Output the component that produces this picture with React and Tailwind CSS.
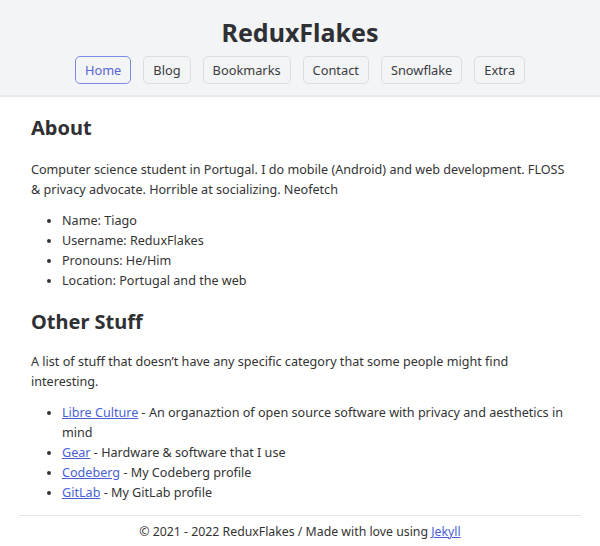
export default function App() {
  const nav = ["Home", "Blog", "Bookmarks", "Contact", "Snowflake", "Extra"];
  return (
    <div className="min-h-[546px] bg-white text-[#333] font-['Noto_Sans',sans-serif] text-[12.6px] leading-[20px]">
      <header className="bg-[#f3f4f6] border-b-2 border-[#e8e9ec] pt-[15px] pb-[11px] flex flex-col items-center">
        <h1 className="text-[25px] leading-[34px] font-bold text-[#2f3033]">ReduxFlakes</h1>
        <nav className="mt-[7px] flex gap-[12px]">
          {nav.map((n, i) => (
            <a
              key={n}
              className={
                i === 0
                  ? "h-[28px] px-[9px] flex items-center rounded-[5px] border border-[#7b8be0] text-[#5665d4] text-[12.8px]"
                  : "h-[28px] px-[9px] flex items-center rounded-[5px] border border-[#dcdde0] text-[#3a3b3e] text-[12.8px]"
              }
            >
              {n}
            </a>
          ))}
        </nav>
      </header>
      <main className="pl-[31px] pr-[31px] pt-[18px]">
        <h2 className="text-[20px] leading-[26px] font-bold text-[#2f3033]">About</h2>
        <p className="mt-[19px]">
          Computer science student in Portugal. I do mobile (Android) and web development. FLOSS &amp; privacy advocate. Horrible at socializing. Neofetch
        </p>
        <ul className="mt-[11px] list-disc pl-[31px]">
          <li>Name: Tiago</li>
          <li>Username: ReduxFlakes</li>
          <li>Pronouns: He/Him</li>
          <li>Location: Portugal and the web</li>
        </ul>
        <h2 className="mt-[18px] text-[20px] leading-[26px] font-bold text-[#2f3033]">Other Stuff</h2>
        <p className="mt-[17px]">
          A list of stuff that doesn’t have any specific category that some people might find interesting.
        </p>
        <ul className="mt-[11px] list-disc pl-[31px]">
          <li><a className="text-[#4a5fd6] underline">Libre Culture</a> - An organaztion of open source software with privacy and aesthetics in mind</li>
          <li><a className="text-[#4a5fd6] underline">Gear</a> - Hardware &amp; software that I use</li>
          <li><a className="text-[#4a5fd6] underline">Codeberg</a> - My Codeberg profile</li>
          <li><a className="text-[#4a5fd6] underline">GitLab</a> - My GitLab profile</li>
        </ul>
      </main>
      <footer className="mx-[19px] mt-[12px] border-t border-[#e3e4e6] pt-[6px] pb-[8px] text-center text-[12.3px]">
        © 2021 - 2022 ReduxFlakes / Made with love using <a className="text-[#4a5fd6] underline">Jekyll</a>
      </footer>
    </div>
  );
}
